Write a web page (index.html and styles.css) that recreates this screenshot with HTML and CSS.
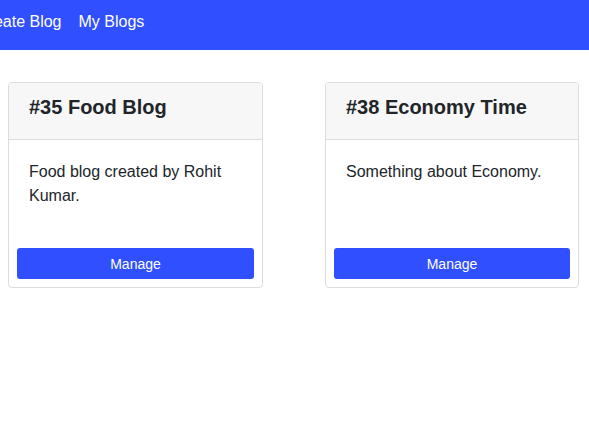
FILE: index.html
```html
<!DOCTYPE html>
<html>
<head>
<meta charset="utf-8">
<link rel="stylesheet" href="styles.css">
</head>
<body>
<nav class="navbar">
  <div class="nav-links">
    <a class="nav-link" href="#">Create Blog</a>
    <a class="nav-link" href="#">My Blogs</a>
  </div>
</nav>
<main class="cards">
  <div class="card">
    <div class="card-header"><h3 class="card-title">#35 Food Blog</h3></div>
    <div class="card-body"><p class="card-text">Food blog created by Rohit Kumar.</p></div>
    <div class="card-footer"><button class="btn">Manage</button></div>
  </div>
  <div class="card">
    <div class="card-header"><h3 class="card-title">#38 Economy Time</h3></div>
    <div class="card-body"><p class="card-text">Something about Economy.</p></div>
    <div class="card-footer"><button class="btn">Manage</button></div>
  </div>
</main>
</body>
</html>
```

FILE: styles.css
```css
html, body {
  margin: 0;
  padding: 0;
  background: #fff;
  font-family: "Liberation Sans", Arial, sans-serif;
  color: #212529;
}
.navbar {
  height: 50px;
  background: #304ffe;
  display: flex;
  align-items: center;
  overflow: hidden;
}
.nav-links {
  display: flex;
  gap: 17px;
  margin-left: -23px;
  margin-top: -7px;
}
.nav-link {
  color: #fff;
  text-decoration: none;
  font-size: 16px;
  line-height: 24px;
  white-space: nowrap;
}
.cards {
  display: grid;
  grid-template-columns: 255px 254px;
  column-gap: 62px;
  padding: 32px 8px;
  align-items: stretch;
}
.card {
  border: 1px solid #dcdcdc;
  border-radius: 4px;
  display: flex;
  flex-direction: column;
  overflow: hidden;
  background: #fff;
}
.card-header {
  background: #f7f7f7;
  border-bottom: 1px solid #dcdcdc;
  padding: 12px 20px;
}
.card-title {
  margin: 0 0 8px;
  font-size: 20px;
  font-weight: bold;
  line-height: 24px;
  color: #212529;
}
.card-body {
  padding: 20px 20px;
  min-height: 100px;
  box-sizing: border-box;
  flex: 1;
}
.card-text {
  margin: 0;
  font-size: 16px;
  line-height: 24px;
}
.card-footer {
  padding: 8px;
}
.btn {
  display: block;
  width: 100%;
  height: 31px;
  border: none;
  border-radius: 3px;
  background: #304ffe;
  color: #fff;
  font-family: "Liberation Sans", Arial, sans-serif;
  font-size: 14px;
  cursor: pointer;
}
```
